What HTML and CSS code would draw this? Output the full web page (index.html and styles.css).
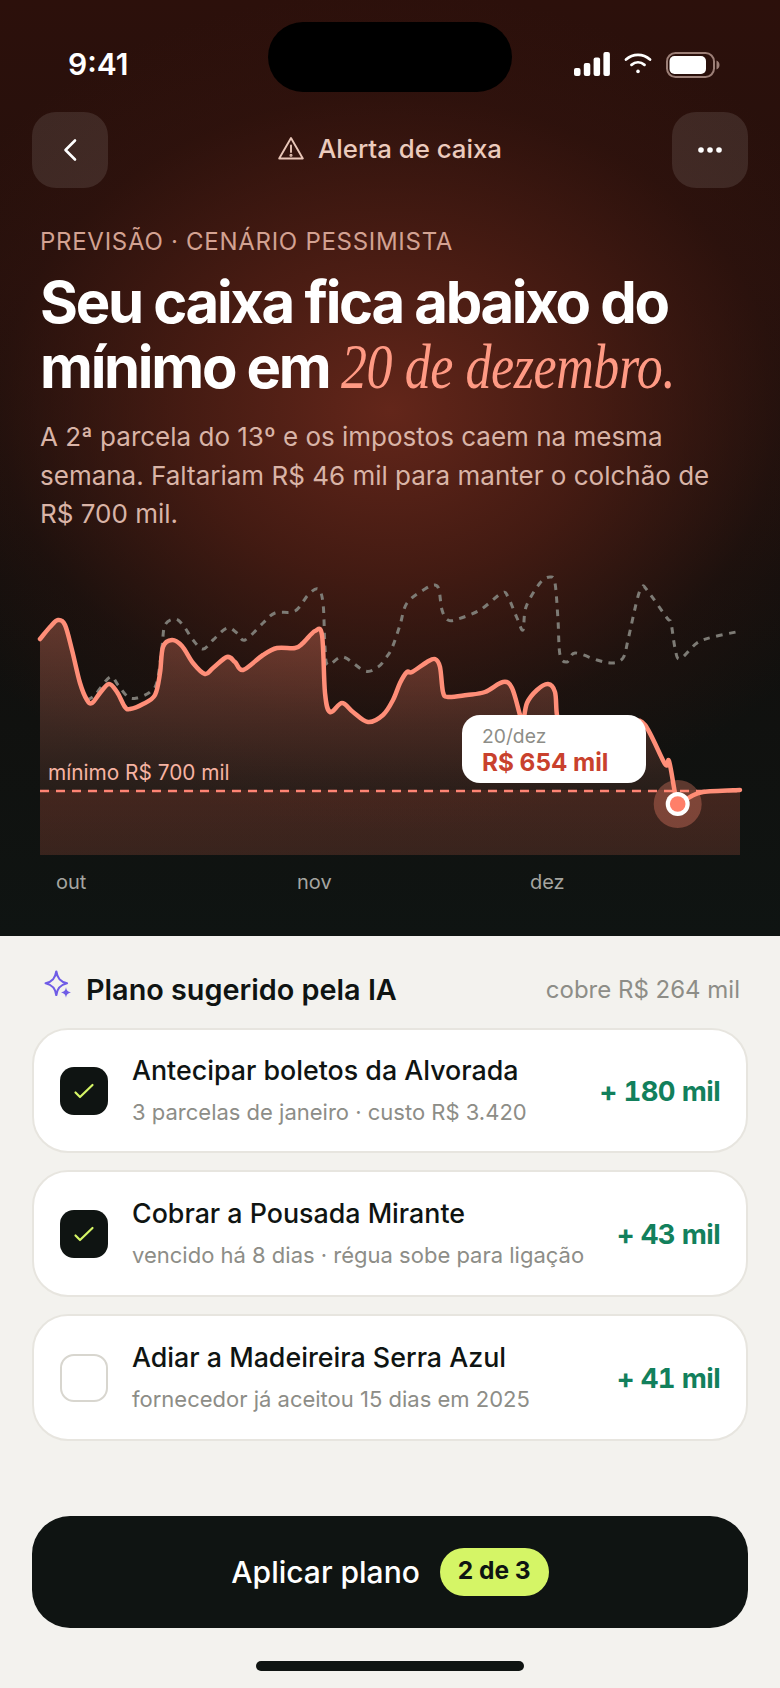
FILE: index.html
```html
<!DOCTYPE html>
<html lang="pt-BR">
<head>
  <meta charset="UTF-8">
  <meta name="viewport" content="width=device-width, initial-scale=1.0">
  <title>Alerta de caixa</title>
  <link rel="stylesheet" href="styles.css">
</head>
<body>
  <main class="screen">
    <section class="hero">
      <div class="status">
        <span class="status__time">9:41</span>
        <span class="status__island"></span>
        <div class="status__icons">
          <svg width="36" height="24" viewBox="0 0 36 24" fill="#fff">
            <rect x="0" y="16" width="6.5" height="8" rx="2"/>
            <rect x="9.8" y="11" width="6.5" height="13" rx="2"/>
            <rect x="19.6" y="5.5" width="6.5" height="18.5" rx="2"/>
            <rect x="29.4" y="0" width="6.5" height="24" rx="2"/>
          </svg>
          <svg width="28" height="22" viewBox="0 0 28 22" fill="none" stroke="#fff" stroke-width="2.8" stroke-linecap="round">
            <path d="M2 7.5C9 1.2 19 1.2 26 7.5"/>
            <path d="M7.5 12.8C11.4 9.6 16.6 9.6 20.5 12.8"/>
            <circle cx="14" cy="19.4" r="1.8" fill="#fff" stroke="none"/>
          </svg>
          <svg width="54" height="26" viewBox="0 0 54 26">
            <rect x="1" y="1" width="47" height="24" rx="8.5" fill="none" stroke="#9c7f77" stroke-width="2"/>
            <rect x="3.5" y="4" width="36.5" height="18" rx="5" fill="#fff"/>
            <path d="M50.5 8.5c2 .8 3 2.5 3 4.5s-1 3.7-3 4.5z" fill="#9c7f77"/>
          </svg>
        </div>
      </div>

      <header class="nav">
        <button class="nav__btn" aria-label="Voltar">
          <svg width="16" height="24" viewBox="0 0 16 24" fill="none" stroke="#fff" stroke-width="2.6" stroke-linecap="round" stroke-linejoin="round">
            <path d="M13 2.5 3.5 12 13 21.5"/>
          </svg>
        </button>
        <div class="nav__title">
          <svg width="26" height="24" viewBox="0 0 26 24" fill="none" stroke="#e9c6b8" stroke-width="1.9" stroke-linejoin="round" stroke-linecap="round">
            <path d="M13 2 24.8 22.5H1.2z"/>
            <path d="M13 9.5V16"/>
            <circle cx="13" cy="19.2" r=".6"/>
          </svg>
          <span>Alerta de caixa</span>
        </div>
        <button class="nav__btn" aria-label="Mais">
          <svg width="24" height="6" viewBox="0 0 24 6" fill="#fff">
            <circle cx="3" cy="3" r="2.8"/><circle cx="12" cy="3" r="2.8"/><circle cx="21" cy="3" r="2.8"/>
          </svg>
        </button>
      </header>

      <div class="intro">
        <p class="intro__eyebrow">PREVISÃO · CENÁRIO PESSIMISTA</p>
        <h1 class="intro__title">Seu caixa fica abaixo do<br>mínimo em <em>20 de dezembro.</em></h1>
        <p class="intro__text">A 2ª parcela do 13º e os impostos caem na mesma semana. Faltariam R$ 46 mil para manter o colchão de R$ 700 mil.</p>
      </div>

      <div class="chart">
        <svg class="chart__svg" width="780" height="299" viewBox="0 570 780 299">
          <defs>
            <linearGradient id="areaFill" gradientUnits="userSpaceOnUse" x1="0" y1="620" x2="0" y2="790">
              <stop offset="0" stop-color="#ff8a70" stop-opacity=".32"/>
              <stop offset="1" stop-color="#ff8a70" stop-opacity=".1"/>
            </linearGradient>
            <linearGradient id="zoneFill" gradientUnits="userSpaceOnUse" x1="0" y1="790" x2="0" y2="855">
              <stop offset="0" stop-color="#ff5a3c" stop-opacity=".13"/>
              <stop offset="1" stop-color="#ff5a3c" stop-opacity=".08"/>
            </linearGradient>
          </defs>
          <path id="ghostLine" fill="none" stroke="#7d7b75" stroke-width="3" stroke-dasharray="6.5 6.5"/>
          <path id="areaShape" fill="url(#areaFill)"/>
          <rect x="40" y="790" width="700" height="65" fill="url(#zoneFill)"/>
          <path d="M40 791H740" stroke="#ff8474" stroke-width="2.5" stroke-dasharray="9 7"/>
          <path id="mainLine" fill="none" stroke="#ff8e78" stroke-width="4.5" stroke-linecap="round" stroke-linejoin="round"/>
          <circle cx="677.7" cy="804" r="24" fill="#ff8a70" fill-opacity=".32"/>
          <circle cx="677.7" cy="804" r="12" fill="#fff"/>
          <circle cx="677.7" cy="804" r="7.8" fill="#ff7f69"/>
        </svg>
        <span class="chart__min">mínimo R$ 700 mil</span>
        <div class="chart__tip">
          <span class="chart__tip-date">20/dez</span>
          <strong class="chart__tip-value">R$ 654 mil</strong>
        </div>
      </div>

      <div class="axis">
        <span>out</span>
        <span>nov</span>
        <span>dez</span>
      </div>
    </section>

    <section class="plan">
      <div class="plan__head">
        <h2 class="plan__title">
          <svg width="30" height="30" viewBox="0 0 30 30">
            <path d="M14.3 1.5C15.3 8 17.8 11.6 25 13.3 17.8 15 15.3 18.6 14.3 25 13.3 18.6 10.8 15 3.6 13.3 10.8 11.6 13.3 8 14.3 1.5Z" fill="none" stroke="#6f5ce6" stroke-width="2.2" stroke-linejoin="round"/>
            <path d="M24 17.3C24.5 20.3 25.6 21.7 29 22.5 25.6 23.3 24.5 24.7 24 27.7 23.5 24.7 22.4 23.3 19 22.5 22.4 21.7 23.5 20.3 24 17.3Z" fill="#6f5ce6"/>
          </svg>
          <span>Plano sugerido pela IA</span>
        </h2>
        <span class="plan__cover">cobre R$ 264 mil</span>
      </div>

      <ul class="plan__list">
        <li class="item">
          <span class="check check--on">
            <svg width="48" height="48" viewBox="0 0 48 48" fill="none" stroke="#d5f566" stroke-width="2.2" stroke-linecap="round" stroke-linejoin="round"><path d="M15.5 25.5 20 30l12.5-12"/></svg>
          </span>
          <div class="item__body">
            <p class="item__title">Antecipar boletos da Alvorada</p>
            <p class="item__sub">3 parcelas de janeiro · custo R$ 3.420</p>
          </div>
          <span class="item__value">+ 180 mil</span>
        </li>
        <li class="item">
          <span class="check check--on">
            <svg width="48" height="48" viewBox="0 0 48 48" fill="none" stroke="#d5f566" stroke-width="2.2" stroke-linecap="round" stroke-linejoin="round"><path d="M15.5 25.5 20 30l12.5-12"/></svg>
          </span>
          <div class="item__body">
            <p class="item__title">Cobrar a Pousada Mirante</p>
            <p class="item__sub">vencido há 8 dias · régua sobe para ligação</p>
          </div>
          <span class="item__value">+ 43 mil</span>
        </li>
        <li class="item">
          <span class="check"></span>
          <div class="item__body">
            <p class="item__title">Adiar a Madeireira Serra Azul</p>
            <p class="item__sub">fornecedor já aceitou 15 dias em 2025</p>
          </div>
          <span class="item__value">+ 41 mil</span>
        </li>
      </ul>

      <button class="apply">
        <span>Aplicar plano</span>
        <span class="apply__pill">2 de 3</span>
      </button>
      <span class="home-bar"></span>
    </section>
  </main>
  <script src="chart.js"></script>
</body>
</html>
```

FILE: styles.css
```css
:root {
  --ink: #0f1412;
  --paper: #f3f2ee;
  --line: #e7e5df;
  --muted: #8d8d87;
  --lime: #d5f566;
  --coral: #ff8e78;
  --green: #12805c;
}
* {
  box-sizing: border-box;
}
html {
  font-family: 'Inter', 'Noto Sans', sans-serif;
}
body {
  margin: 0;
  background-color: var(--paper);
}
p, h1, h2, ul {
  margin: 0;
  padding: 0;
}
button {
  font: inherit;
  border: 0;
  cursor: pointer;
}
.screen {
  width: 780px;
  height: 1688px;
  overflow: hidden;
}

/* top dark part */
.hero {
  height: 936px;
  color: #fff;
  background:
    radial-gradient(ellipse 520px 420px at 390px 410px, #63261a 0%, rgba(80, 30, 20, 0.78) 40%, rgba(60, 22, 15, 0.28) 75%, rgba(40, 15, 10, 0) 100%),
    linear-gradient(180deg, #2c100b 0%, #24100c 30%, #110f0d 62%, var(--ink) 100%);
}
.status {
  display: grid;
  grid-template-columns: 1fr 244px 1fr;
  height: 92px;
  padding-top: 22px;
}
.status__time {
  padding: 24px 0 0 68px;
  font-size: 30px;
  line-height: 36px;
  font-weight: 600;
}
.status__island {
  height: 70px;
  border-radius: 35px;
  background: #000;
}
.status__icons {
  display: flex;
  align-items: flex-start;
  gap: 14px;
  padding: 30px 0 0 62px;
}
.nav {
  display: flex;
  justify-content: space-between;
  align-items: center;
  margin-top: 20px;
  padding: 0 32px;
}
.nav__btn {
  display: flex;
  justify-content: center;
  align-items: center;
  width: 76px;
  height: 76px;
  border-radius: 24px;
  background: rgba(255, 255, 255, 0.1);
}
.nav__title {
  display: flex;
  align-items: center;
  gap: 14px;
  margin-top: -4px;
  color: #eccbbd;
  font-size: 25.8px;
  font-weight: 500;
}
.intro {
  padding: 0 40px;
}
.intro__eyebrow {
  margin-top: 39px;
  color: #d3a292;
  font-size: 24px;
  line-height: 30px;
  letter-spacing: 0.72px;
}
.intro__title {
  margin-top: 13px;
  font-size: 58px;
  line-height: 65px;
  font-weight: 650;
  letter-spacing: -2.3px;
  white-space: nowrap;
}
.intro__title em {
  display: inline-block;
  font-family: 'Liberation Serif', serif;
  font-size: 63px;
  font-weight: 400;
  line-height: 60px;
  color: #ff9a84;
  letter-spacing: -0.5px;
  transform: scaleX(0.825);
  transform-origin: left;
}
.intro__text {
  margin-top: 18px;
  color: #d9b4a7;
  font-size: 26px;
  line-height: 38.5px;
}
.chart {
  position: relative;
  margin-top: 36px;
}
.chart__svg {
  display: block;
}
.chart__min {
  position: absolute;
  left: 48px;
  top: 190px;
  color: #f6b3a2;
  font-size: 20.8px;
  line-height: 26px;
}
.chart__tip {
  position: absolute;
  left: 462px;
  top: 145px;
  display: flex;
  flex-direction: column;
  justify-content: center;
  width: 184px;
  height: 68px;
  padding: 3px 0 0 20px;
  border-radius: 18px;
  background: #fff;
}
.chart__tip-date {
  color: var(--muted);
  font-size: 19.3px;
  line-height: 23px;
}
.chart__tip-value {
  color: #c9412d;
  font-size: 24.3px;
  line-height: 28px;
  font-weight: 700;
}
.axis {
  display: grid;
  grid-template-columns: 241px 233px 1fr;
  padding: 0 0 0 56px;
  color: #a5a5a0;
  font-size: 20px;
  line-height: 26px;
}

/* plano */
.plan {
  padding: 0 32px;
}
.plan__head {
  display: flex;
  justify-content: space-between;
  align-items: center;
  height: 92px;
  padding: 14px 8px 0 10px;
}
.plan__title {
  display: flex;
  align-items: center;
  gap: 14px;
  font-size: 28.8px;
  font-weight: 600;
  color: #0f1412;
}
.plan__title svg {
  margin-top: -8px;
}
.plan__cover {
  color: var(--muted);
  font-size: 24px;
}
.plan__list {
  display: flex;
  flex-direction: column;
  gap: 17px;
  list-style: none;
}
.item {
  display: flex;
  align-items: center;
  height: 127px;
  padding: 0 26px;
  border: 2px solid var(--line);
  border-radius: 36px;
  background: #fff;
}
.item:first-child {
  height: 125px;
}
.check {
  flex: none;
  width: 48px;
  height: 48px;
  border: 2px solid #d8d6cf;
  border-radius: 14px;
}
.check--on {
  border: 0;
  background: var(--ink);
}
.check svg {
  display: block;
}
.item__body {
  flex: 1;
  margin-left: 24px;
}
.item__title {
  color: #0f1412;
  font-size: 26.8px;
  line-height: 32px;
  font-weight: 500;
}
.item__sub {
  margin-top: 11px;
  color: var(--muted);
  font-size: 22px;
  line-height: 30px;
}
.item__value {
  color: var(--green);
  font-size: 27.5px;
  font-weight: 700;
  font-variant-numeric: tabular-nums;
  letter-spacing: -0.6px;
  white-space: nowrap;
}
.apply {
  display: flex;
  justify-content: center;
  align-items: center;
  gap: 20px;
  width: 716px;
  height: 112px;
  margin-top: 75px;
  border-radius: 38px;
  background: var(--ink);
  color: #fff;
  font-size: 30px;
  font-weight: 500;
}
.apply__pill {
  padding: 0 18px;
  height: 48px;
  line-height: 44px;
  border-radius: 24px;
  background: var(--lime);
  color: #0f1412;
  font-size: 24.5px;
  font-weight: 700;
}
.home-bar {
  display: block;
  width: 268px;
  height: 10px;
  margin: 33px auto 0;
  border-radius: 5px;
  background: var(--ink);
}
```

FILE: chart.js
```js
// points were read off the 780 wide layout, x / y in page pixels
const main = [[40,639],[50,627],[58,620],[65,625],[72,650],[80,683],[87,700],[92,703],[100,693],[109,684],[117,692],[125,707],[130,709],[143,704],[155,695],[160,673],[163,647],[172,640],[182,646],[193,663],[205,674],[213,668],[227,657],[235,662],[243,670],[263,655],[277,648],[295,648],[303,643],[315,631],[322,635],[325,693],[330,712],[342,703],[353,712],[368,722],[383,715],[393,700],[400,683],[407,672],[412,672],[427,662],[435,659],[440,667],[443,692],[448,697],[467,695],[485,692],[503,682],[512,688],[520,715],[523,722],[527,703],[537,690],[548,684],[555,692],[557,715],[562,730],[600,730],[630,722],[645,725],[665,764],[669,761],[675,793],[678,804],[690,797],[703,792],[740,790]];
const ghost = [[87,700],[95,695],[110,677],[118,685],[128,697],[137,698],[150,692],[157,682],[162,647],[165,625],[175,619],[183,625],[193,640],[203,649],[213,640],[227,628],[237,633],[245,640],[263,623],[275,613],[295,611],[308,595],[318,589],[323,603],[325,647],[328,665],[343,657],[365,671],[378,667],[385,659],[392,648],[400,625],[407,603],[425,589],[435,585],[439,590],[442,610],[448,620],[458,619],[480,610],[502,593],[508,597],[517,618],[523,630],[526,607],[540,583],[550,577],[555,583],[558,620],[560,655],[567,662],[575,653],[597,660],[612,663],[623,658],[628,640],[637,600],[642,587],[647,590],[667,618],[671,623],[675,648],[680,659],[697,643],[713,637],[736,632]];

const smooth = (pts) => {
  let d = `M${pts[0][0]} ${pts[0][1]}`;
  for (let i = 0; i < pts.length - 1; i++) {
    const p0 = pts[i - 1] || pts[i];
    const p1 = pts[i];
    const p2 = pts[i + 1];
    const p3 = pts[i + 2] || p2;
    const c1x = p1[0] + (p2[0] - p0[0]) / 6;
    const c1y = p1[1] + (p2[1] - p0[1]) / 6;
    const c2x = p2[0] - (p3[0] - p1[0]) / 6;
    const c2y = p2[1] - (p3[1] - p1[1]) / 6;
    d += `C${c1x.toFixed(1)} ${c1y.toFixed(1)} ${c2x.toFixed(1)} ${c2y.toFixed(1)} ${p2[0]} ${p2[1]}`;
  }
  return d;
};

document.getElementById('mainLine').setAttribute('d', smooth(main));
document.getElementById('ghostLine').setAttribute('d', smooth(ghost));
document.getElementById('areaShape').setAttribute('d', smooth(main) + 'L740 855L40 855Z');
```
